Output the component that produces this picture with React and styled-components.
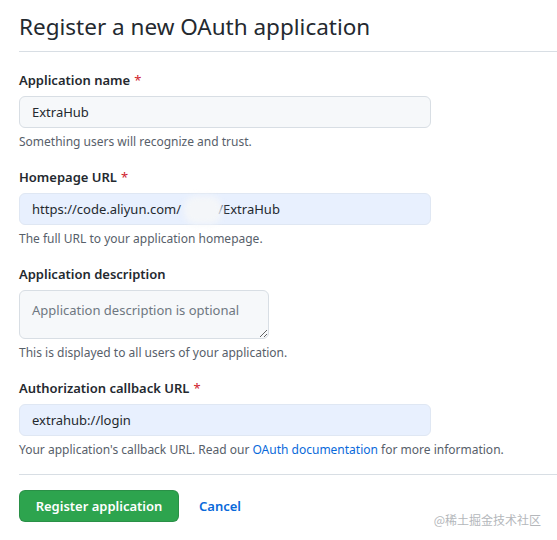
import React from 'react';
import styled, { createGlobalStyle } from 'styled-components';

const GlobalStyle = createGlobalStyle`
  html, body {
    margin: 0;
    padding: 0;
    background: #ffffff;
  }
  body {
    font-family: "Noto Sans", "Liberation Sans", sans-serif;
    color: #24292f;
  }
`;

const Page = styled.div`
  width: 557px;
  height: 540px;
  padding-left: 19px;
  box-sizing: border-box;
  position: relative;
  overflow: hidden;
`;

const Header = styled.div`
  padding-top: 10px;
  padding-bottom: 8px;
  border-bottom: 1px solid #d8dee4;
`;

const Title = styled.h1`
  margin: 0;
  font-size: 22.5px;
  font-weight: 400;
  line-height: 33px;
  color: #24292f;
`;

const Form = styled.form`
  padding-top: 18px;
  display: flex;
  flex-direction: column;
  gap: 16px;
`;

const Group = styled.div``;

const Label = styled.label`
  display: block;
  font-size: 13px;
  font-weight: 600;
  line-height: 20px;
  margin-bottom: 6px;
  color: #24292f;
`;

const Required = styled.span`
  color: #cf222e;
  margin-left: 4px;
  font-weight: 400;
`;

const FieldWrap = styled.div`
  position: relative;
  width: ${p => p.$width || '412px'};
`;

const Input = styled.input`
  display: block;
  box-sizing: border-box;
  width: 100%;
  height: 32px;
  padding: 5px 12px;
  font-family: inherit;
  font-size: 13px;
  color: #24292f;
  background: ${p => (p.$filled ? '#e8f0fe' : '#f6f8fa')};
  border: 1px solid ${p => (p.$filled ? '#dfe7f3' : '#d8dee4')};
  border-radius: 6px;
  outline: none;
`;

const Smudge = styled.span`
  position: absolute;
  left: 165px;
  top: 3px;
  width: 38px;
  height: 28px;
  border-radius: 12px;
  background: #f4f6f9;
  filter: blur(3px);
  pointer-events: none;
`;

const TextArea = styled.textarea`
  display: block;
  box-sizing: border-box;
  width: 250px;
  height: 49px;
  padding: 9px 12px;
  font-family: inherit;
  font-size: 13px;
  line-height: 20px;
  color: #24292f;
  background: #f6f8fa;
  border: 1px solid #d8dee4;
  border-radius: 6px;
  resize: vertical;
  outline: none;

  &::placeholder {
    color: #6e7781;
  }
`;

const Note = styled.p`
  margin: 5px 0 0;
  font-size: 12px;
  line-height: 18px;
  color: #57606a;
`;

const Link = styled.a`
  color: #0969da;
  text-decoration: none;
`;

const Footer = styled.div`
  border-top: 1px solid #d8dee4;
  margin-top: -1px;
  padding-top: 15px;
  display: flex;
  align-items: center;
  gap: 20px;
`;

const PrimaryButton = styled.button`
  height: 32px;
  width: 160px;
  padding: 0;
  font-family: inherit;
  font-size: 13px;
  font-weight: 600;
  color: #ffffff;
  background: #2da44e;
  border: 1px solid rgba(27, 31, 36, 0.15);
  border-radius: 6px;
  cursor: pointer;
`;

const CancelLink = styled.a`
  font-size: 13px;
  font-weight: 600;
  color: #0969da;
  text-decoration: none;
`;

const Watermark = styled.div`
  position: absolute;
  right: 16px;
  bottom: 12px;
  font-size: 12px;
  line-height: 16px;
  color: #b4b7bb;
  font-family: "Noto Sans CJK SC", "Noto Sans", sans-serif;
`;

export default function App() {
  return (
    <>
      <GlobalStyle />
      <Page>
        <Header>
          <Title>Register a new OAuth application</Title>
        </Header>
        <Form onSubmit={e => e.preventDefault()}>
          <Group>
            <Label>Application name<Required>*</Required></Label>
            <FieldWrap>
              <Input defaultValue="ExtraHub" />
            </FieldWrap>
            <Note>Something users will recognize and trust.</Note>
          </Group>
          <Group>
            <Label>Homepage URL<Required>*</Required></Label>
            <FieldWrap>
              <Input $filled defaultValue={'https://code.aliyun.com/           /ExtraHub'} />
              <Smudge />
            </FieldWrap>
            <Note>The full URL to your application homepage.</Note>
          </Group>
          <Group>
            <Label>Application description</Label>
            <TextArea placeholder="Application description is optional" />
            <Note>This is displayed to all users of your application.</Note>
          </Group>
          <Group>
            <Label>Authorization callback URL<Required>*</Required></Label>
            <FieldWrap>
              <Input $filled defaultValue="extrahub://login" />
            </FieldWrap>
            <Note>
              Your application's callback URL. Read our <Link href="#">OAuth documentation</Link> for more information.
            </Note>
          </Group>
          <Footer>
            <PrimaryButton type="submit">Register application</PrimaryButton>
            <CancelLink href="#">Cancel</CancelLink>
          </Footer>
        </Form>
        <Watermark>@稀土掘金技术社区</Watermark>
      </Page>
    </>
  );
}
